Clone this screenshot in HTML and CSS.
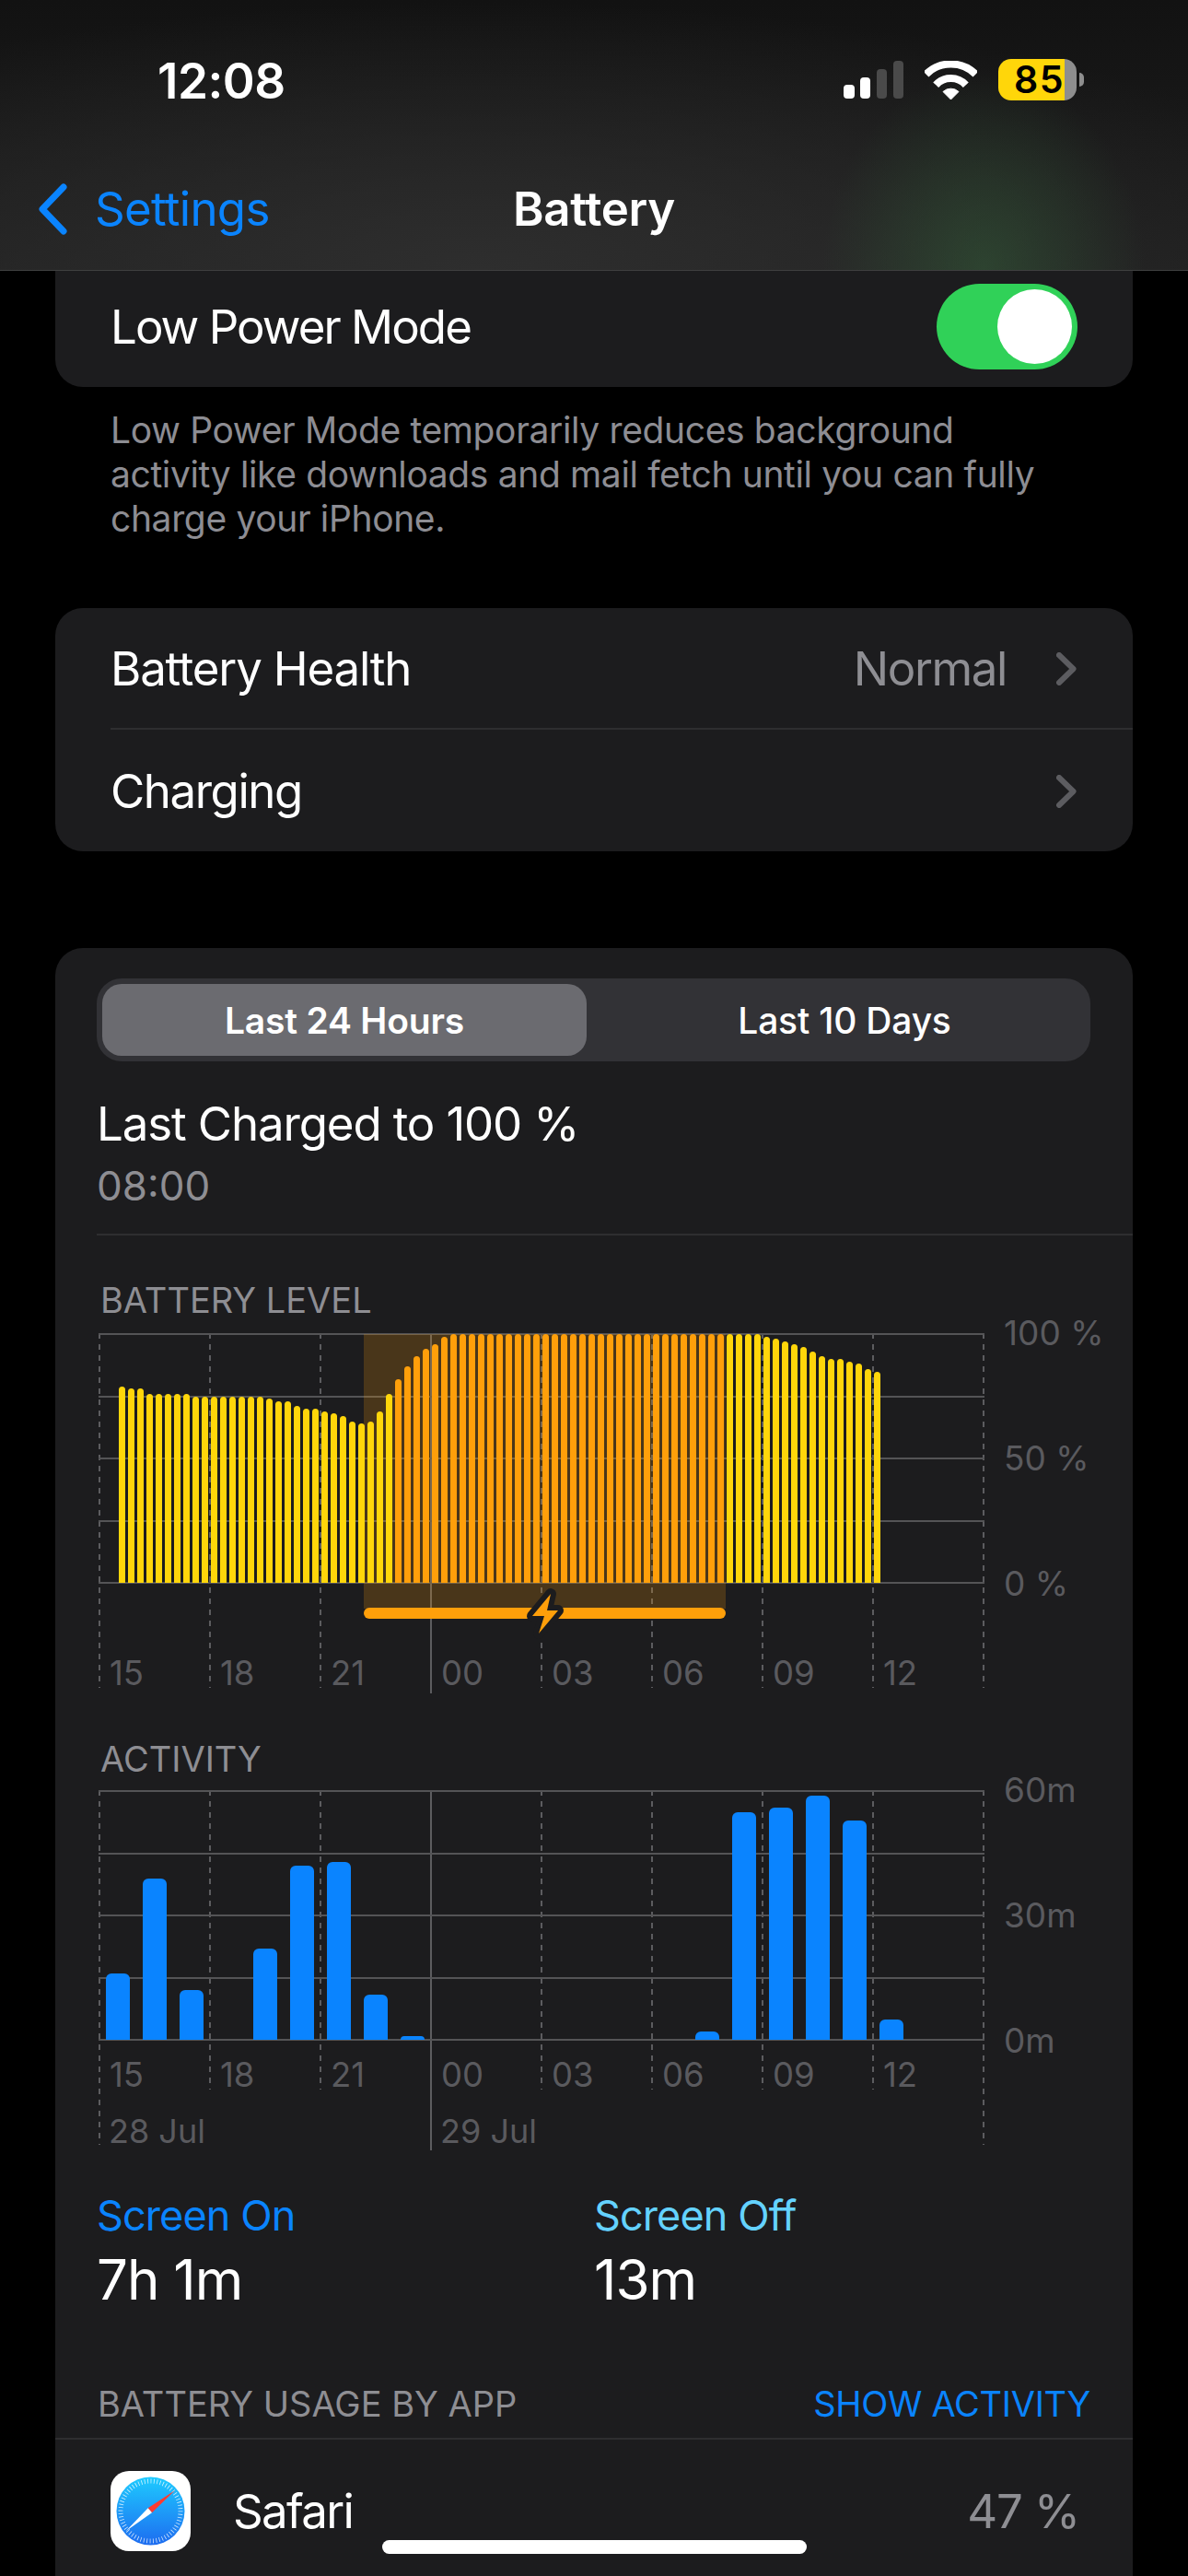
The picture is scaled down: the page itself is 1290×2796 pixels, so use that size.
FILE: index.html
```html
<!DOCTYPE html>
<html lang="en">
<head>
<meta charset="utf-8">
<title>Battery</title>
<link rel="stylesheet" href="styles.css">
</head>
<body>
<div class="screen">
  <header class="topbar">
    <div class="status">
      <div class="time">12:08</div>
      <div class="status-icons">
        <svg class="signal" width="65" height="41" viewBox="0 0 65 41"><rect x="0" y="26" width="12" height="15" rx="4" fill="#fff"/><rect x="18" y="18" width="11" height="23" rx="4" fill="#fff"/><rect x="36" y="9" width="11" height="32" rx="4" fill="#4a4a4a"/><rect x="54" y="0" width="11" height="41" rx="4" fill="#4a4a4a"/></svg>
        <svg class="wifi" width="57" height="42" viewBox="0 0 57 42"><path d="M1.6 14.6a38 38 0 0 1 53.8 0" fill="none" stroke="#fff" stroke-width="8"/><path d="M12.2 26.2a22 22 0 0 1 32.6 0" fill="none" stroke="#fff" stroke-width="8"/><path d="M20 33.5a12.5 12.5 0 0 1 17 0L28.5 42z" fill="#fff" stroke="#fff" stroke-width="1" stroke-linejoin="round"/></svg>
        <div class="batt"><span class="batt-num">85</span></div>
        <div class="batt-cap"></div>
      </div>
    </div>
    <nav class="nav">
      <a class="back">
        <svg class="back-chev" width="32" height="56" viewBox="0 0 32 56"><path d="M28 4 5 28l23 24" fill="none" stroke="#0a84ff" stroke-width="7" stroke-linecap="round" stroke-linejoin="round"/></svg>
        <span>Settings</span>
      </a>
      <div class="nav-title">Battery</div>
      <div></div>
    </nav>
  </header>

  <main class="content">
    <section class="card card-lpm">
      <div class="lpm-row">
        <span class="row-label label-lpm">Low Power Mode</span>
        <div class="switch"><div class="knob"></div></div>
      </div>
    </section>
    <p class="footnote">Low Power Mode temporarily reduces background<br>activity like downloads and mail fetch until you can fully<br>charge your iPhone.</p>

    <section class="card card-links">
      <div class="link-row link-row-first">
        <span class="row-label">Battery Health</span>
        <span class="row-value">Normal</span>
        <svg class="chev" width="22" height="36" viewBox="0 0 22 36"><path d="M3 3l15.500 15L3 33" fill="none" stroke="#5c5c60" stroke-width="6" stroke-linecap="round" stroke-linejoin="round"/></svg>
      </div>
      <div class="link-row">
        <span class="row-label label-charging">Charging</span>
        <svg class="chev" width="22" height="36" viewBox="0 0 22 36"><path d="M3 3l15.500 15L3 33" fill="none" stroke="#5c5c60" stroke-width="6" stroke-linecap="round" stroke-linejoin="round"/></svg>
      </div>
    </section>

    <section class="card card-usage">
      <div class="seg">
        <div class="seg-item seg-on">Last 24 Hours</div>
        <div class="seg-item">Last 10 Days</div>
      </div>
      <div class="charged">Last Charged to 100 %</div>
      <div class="charged-time">08:00</div>
      <div class="rule"></div>

      <div class="chart-title title-level">BATTERY LEVEL</div>
      <div class="chart-row">
        <div class="frame">
          <div class="vgrid">
            <i class="d"></i><i class="d"></i><i class="d"></i><i class="s"></i><i class="d"></i><i class="d"></i><i class="d"></i><i class="d"></i><i class="d"></i>
          </div>
          <div class="plot">
            <div class="hgrid"><i></i><i></i><i></i><i></i><i></i></div>
            <div class="shade"></div>
            <div class="lbars">
              <i style="height:78.8%"></i><i style="height:78%"></i><i style="height:78%"></i><i style="height:75.8%"></i><i style="height:75.8%"></i><i style="height:75.8%"></i><i style="height:75.8%"></i><i style="height:75.8%"></i><i style="height:74.7%"></i><i style="height:74.7%"></i><i style="height:74.7%"></i><i style="height:74.7%"></i><i style="height:74.7%"></i><i style="height:74.7%"></i><i style="height:74.7%"></i><i style="height:74.7%"></i><i style="height:74%"></i><i style="height:72.8%"></i><i style="height:72.8%"></i><i style="height:71%"></i><i style="height:69.9%"></i><i style="height:69.9%"></i><i style="height:68.8%"></i><i style="height:68%"></i><i style="height:66.9%"></i><i style="height:64.7%"></i><i style="height:64%"></i><i style="height:64.7%"></i><i style="height:68.8%"></i><i style="height:75.8%"></i><i class="o" style="height:81.7%"></i><i class="o" style="height:86.9%"></i><i class="o" style="height:91%"></i><i class="o" style="height:94%"></i><i class="o" style="height:95.8%"></i><i class="o" style="height:98.8%"></i><i class="o" style="height:100%"></i><i class="o" style="height:100%"></i><i class="o" style="height:100%"></i><i class="o" style="height:100%"></i><i class="o" style="height:100%"></i><i class="o" style="height:100%"></i><i class="o" style="height:100%"></i><i class="o" style="height:100%"></i><i class="o" style="height:100%"></i><i class="o" style="height:100%"></i><i class="o" style="height:100%"></i><i class="o" style="height:100%"></i><i class="o" style="height:100%"></i><i class="o" style="height:100%"></i><i class="o" style="height:100%"></i><i class="o" style="height:100%"></i><i class="o" style="height:100%"></i><i class="o" style="height:100%"></i><i class="o" style="height:100%"></i><i class="o" style="height:100%"></i><i class="o" style="height:100%"></i><i class="o" style="height:100%"></i><i class="o" style="height:100%"></i><i class="o" style="height:100%"></i><i class="o" style="height:100%"></i><i class="o" style="height:100%"></i><i class="o" style="height:100%"></i><i class="o" style="height:100%"></i><i class="o" style="height:100%"></i><i class="o" style="height:100%"></i><i style="height:100%"></i><i style="height:100%"></i><i style="height:100%"></i><i style="height:100%"></i><i style="height:98.8%"></i><i style="height:98%"></i><i style="height:96.9%"></i><i style="height:95.8%"></i><i style="height:94.7%"></i><i style="height:92.8%"></i><i style="height:91%"></i><i style="height:89.9%"></i><i style="height:89.9%"></i><i style="height:88.8%"></i><i style="height:88%"></i><i style="height:85.8%"></i><i style="height:84.7%"></i>
            </div>
          </div>
          <div class="chargebar"></div>
          <svg class="bolt" width="50" height="60" viewBox="0 0 50 60"><path d="M31 7 11 31h13l-6 19 21-25H27z" fill="#ff9f0a" stroke="#1c1c1e" stroke-width="12" stroke-linejoin="round" paint-order="stroke"/></svg>
          <div class="xaxis xaxis-level"><span>15</span><span>18</span><span>21</span><span>00</span><span>03</span><span>06</span><span>09</span><span>12</span></div>
        </div>
        <div class="ylabels"><span>100 %</span><span>50 %</span><span>0 %</span></div>
      </div>

      <div class="chart-title title-activity">ACTIVITY</div>
      <div class="chart-row">
        <div class="frame">
          <div class="vgrid">
            <i class="d"></i><i class="d short"></i><i class="d short"></i><i class="s"></i><i class="d short"></i><i class="d short"></i><i class="d short"></i><i class="d short"></i><i class="d"></i>
          </div>
          <div class="plot">
            <div class="hgrid"><i></i><i></i><i></i><i></i><i></i></div>
            <div class="abars">
              <i style="height:26.7%"></i><i style="height:64.8%"></i><i style="height:20%"></i><i></i><i style="height:36.7%"></i><i style="height:70%"></i><i style="height:71.5%"></i><i style="height:18.1%"></i><i style="height:1.5%"></i><i></i><i></i><i></i><i></i><i></i><i></i><i></i><i style="height:3.3%"></i><i style="height:91.5%"></i><i style="height:93.300%"></i><i style="height:98.1%"></i><i style="height:88.1%"></i><i style="height:8.1%"></i>
            </div>
          </div>
          <div class="xaxis xaxis-activity"><span>15</span><span>18</span><span>21</span><span>00</span><span>03</span><span>06</span><span>09</span><span>12</span></div>
          <div class="dates"><span>28 Jul</span><span>29 Jul</span></div>
        </div>
        <div class="ylabels"><span>60m</span><span>30m</span><span>0m</span></div>
      </div>

      <div class="stats">
        <div><div class="stat-label stat-on">Screen On</div><div class="stat-value">7h 1m</div></div>
        <div><div class="stat-label stat-off">Screen Off</div><div class="stat-value">13m</div></div>
      </div>

      <div class="usage-head">
        <span class="usage-title">BATTERY USAGE BY APP</span>
        <span class="usage-link">SHOW ACTIVITY</span>
      </div>
      <div class="rule rule-full"></div>
      <div class="app-row">
        <svg class="safari" width="87" height="87" viewBox="0 0 87 87">
          <defs><linearGradient id="sf" x1="0" y1="0" x2="0" y2="1"><stop offset="0" stop-color="#1ecbff"/><stop offset="1" stop-color="#1d6cf0"/></linearGradient></defs>
          <rect width="87" height="87" rx="20" fill="#fff"/>
          <circle cx="43.500" cy="43.500" r="37" fill="url(#sf)"/>
          <circle cx="43.500" cy="43.500" r="32.500" fill="none" stroke="#fff" stroke-opacity=".8" stroke-width="5" stroke-dasharray="0.8 2.6"/>
          <path d="M70 21 40.700 40.300 45 45.300z" fill="#ff3b30"/>
          <path d="M16.700 65.300 40.700 40.300 45 45.300z" fill="#fff"/>
        </svg>
        <span class="row-label app-name">Safari</span>
        <span class="row-value app-pct">47 %</span>
      </div>
    </section>
  </main>
  <div class="home"></div>
</div>
</body>
</html>
```
FILE: styles.css
```css
* { box-sizing: border-box; }
html, body { margin: 0; padding: 0; background: #000; }
body { width: 1290px; height: 2796px; overflow: hidden; font-family: Inter, "Noto Sans", "Liberation Sans", sans-serif; color: #fff; }
i { display: block; }
.screen { position: relative; width: 1290px; height: 2796px; overflow: hidden; }

.topbar {
  height: 294px;
  border-bottom: 1px solid #3e3f3f;
  background:
    radial-gradient(ellipse 175px 215px at 1068px 293px, rgba(52, 96, 58, .5), rgba(52, 96, 58, 0)),
    radial-gradient(ellipse 1000px 290px at 520px 293px, #2e2e2e, rgba(46, 46, 46, 0)),
    linear-gradient(#121212, #1f1f1f);
}
.status { height: 176px; display: flex; align-items: center; justify-content: space-between; padding: 0 113px 0 171px; }
.time { font-size: 53px; font-weight: 600; letter-spacing: -.5px; line-height: 60px; }
.status-icons { display: flex; align-items: center; margin-bottom: 3px; }
.wifi { margin-left: 23px; }
.batt { margin-left: 23px; width: 85px; height: 45px; border-radius: 14px; background: linear-gradient(90deg, #ffd60a 72px, #8e8e8e 72px); display: flex; align-items: center; padding-left: 17px; }
.batt-num { color: #000; font-size: 41px; font-weight: 600; line-height: 45px; letter-spacing: 1.5px; }
.batt-cap { margin-left: 3px; width: 5px; height: 15px; background: #8e8e8e; border-radius: 0 8px 8px 0; }
.nav { height: 102px; display: grid; grid-template-columns: 1fr auto 1fr; align-items: center; }
.back { display: flex; align-items: center; gap: 30px; padding-left: 41px; color: #0a84ff; font-size: 51px; letter-spacing: -.7px; line-height: 60px; }
.nav-title { font-size: 51px; font-weight: 600; letter-spacing: -.3px; line-height: 60px; }

.content { display: flex; flex-direction: column; }
.card { margin: 0 60px; background: #1c1c1e; border-radius: 30px; }
.row-label { font-size: 51px; letter-spacing: -1.2px; line-height: 60px; }
.label-lpm { letter-spacing: -1.95px; }
.label-charging { letter-spacing: -1.45px; }
.row-value { color: #8e8e93; font-size: 51px; letter-spacing: -1.4px; line-height: 60px; }

.card-lpm { border-radius: 0 0 30px 30px; height: 126px; }
.lpm-row { height: 121px; display: flex; align-items: center; justify-content: space-between; padding: 0 60px; }
.switch { width: 153px; height: 93px; border-radius: 47px; background: #30d158; display: flex; align-items: center; justify-content: flex-end; padding-right: 6px; }
.knob { width: 81px; height: 81px; border-radius: 50%; background: #fff; }
.footnote { margin: 23px 60px 73px; color: #8d8d93; font-size: 39px; line-height: 48px; padding-left: 60px; letter-spacing: -.36px; }

.card-links { height: 264px; }
.link-row { height: 132px; display: flex; align-items: center; padding: 2px 61px 0 0; margin-left: 60px; }
.link-row-first { border-bottom: 2px solid #2e2e30; }
.link-row .row-label { flex: 1; }
.link-row .row-value { margin-right: 54px; }
.chev { display: block; }

.card-usage { margin-top: 105px; padding: 33px 46px 0 45px; border-radius: 30px 30px 0 0; height: 1800px; }
.seg { height: 90px; border-radius: 27px; background: #323236; padding: 6px; display: grid; grid-template-columns: 526px 522px; justify-content: space-between; }
.seg-item { border-radius: 21px; display: flex; align-items: center; justify-content: center; font-size: 39px; font-weight: 500; letter-spacing: -.2px; }
.seg-on { background: #6b6b70; font-weight: 600; }
.charged { margin-top: 38px; font-size: 51px; line-height: 60px; letter-spacing: -1.13px; }
.charged-time { margin-top: 10px; color: #8e8e93; font-size: 44px; line-height: 54px; }
.rule { height: 2px; background: #2e2e30; margin: 25px -46px 0 0; }
.rule-full { margin: 14px -46px 0 -45px; }

.chart-title { color: #8e8e93; font-size: 38px; line-height: 46px; margin-left: 4px; }
.title-level { margin-top: 47px; margin-bottom: 13px; }
.title-activity { margin-top: 54px; margin-bottom: 11px; }
.chart-row { display: flex; align-items: flex-start; margin-left: 2px; }
.frame { position: relative; flex: none; width: 962px; height: 385px; }
.plot { position: relative; height: 272px; }
.hgrid { height: 272px; display: flex; flex-direction: column; justify-content: space-between; }
.hgrid i { height: 2px; background: #545456; }
.vgrid { position: absolute; left: 0; right: 0; top: 0; bottom: 0; display: flex; justify-content: space-between; }
.vgrid i { width: 2px; }
.vgrid .d { height: 385px; background: repeating-linear-gradient(#5c5c5f 0 6px, transparent 6px 12px); }
.vgrid .short { height: 325px; }
.vgrid .s { height: 391px; background: #5c5c5f; }
.shade { position: absolute; left: 288px; top: 1px; width: 393px; height: 298px; background: rgba(255, 159, 10, .2); }
.lbars { position: absolute; left: 22px; top: 1px; height: 270px; display: flex; align-items: flex-end; gap: 3px; }
.lbars i { width: 7px; background: #ffd60a; border-radius: 4px 4px 0 0; }
.lbars .o { background: #ff9f0a; }
.abars { position: absolute; left: 8px; top: 1px; height: 270px; display: flex; align-items: flex-end; gap: 14px; }
.abars i { width: 26px; background: #0a84ff; border-radius: 6px 6px 0 0; }
.chargebar { position: absolute; left: 288px; top: 298px; width: 393px; height: 12px; border-radius: 6px; background: #ff9f0a; }
.bolt { position: absolute; left: 460px; top: 276px; }
.xaxis { position: relative; display: grid; grid-template-columns: repeat(8, 120px); padding-left: 12px; color: #5a5a5e; font-size: 36.5px; line-height: 44px; }
.xaxis-level { margin-top: 75px; }
.xaxis-activity { margin-top: 15px; }
.dates { position: relative; display: grid; grid-template-columns: 360px 360px; padding-left: 11px; margin-top: 17px; color: #5a5a5e; font-size: 36px; line-height: 44px; }
.ylabels { flex: none; height: 316px; margin: -22px 0 0 21px; display: flex; flex-direction: column; justify-content: space-between; color: #5a5a5e; font-size: 37px; line-height: 44px; }

.stats { margin-top: 49px; display: grid; grid-template-columns: 540px 1fr; }
.stat-label { font-size: 45px; line-height: 56px; letter-spacing: -.9px; }
.stat-on { color: #0a84ff; }
.stat-off { color: #64d2ff; }
.stat-value { margin-top: 5px; font-size: 60px; line-height: 72px; letter-spacing: -1px; }
.usage-head { margin-top: 76px; display: flex; justify-content: space-between; font-size: 38px; line-height: 46px; padding-left: 1px; }
.usage-title { color: #8e8e93; }
.usage-link { color: #0a84ff; letter-spacing: -.3px; }
.app-row { display: flex; align-items: center; margin: 34px 12px 0 15px; height: 87px; }
.safari { flex: none; display: block; }
.app-name { flex: 1; margin-left: 46px; letter-spacing: -1.7px; }
.app-pct { letter-spacing: -1.1px; }
.home { position: absolute; left: 415px; top: 2757px; width: 461px; height: 15px; border-radius: 8px; background: #fff; }
```
